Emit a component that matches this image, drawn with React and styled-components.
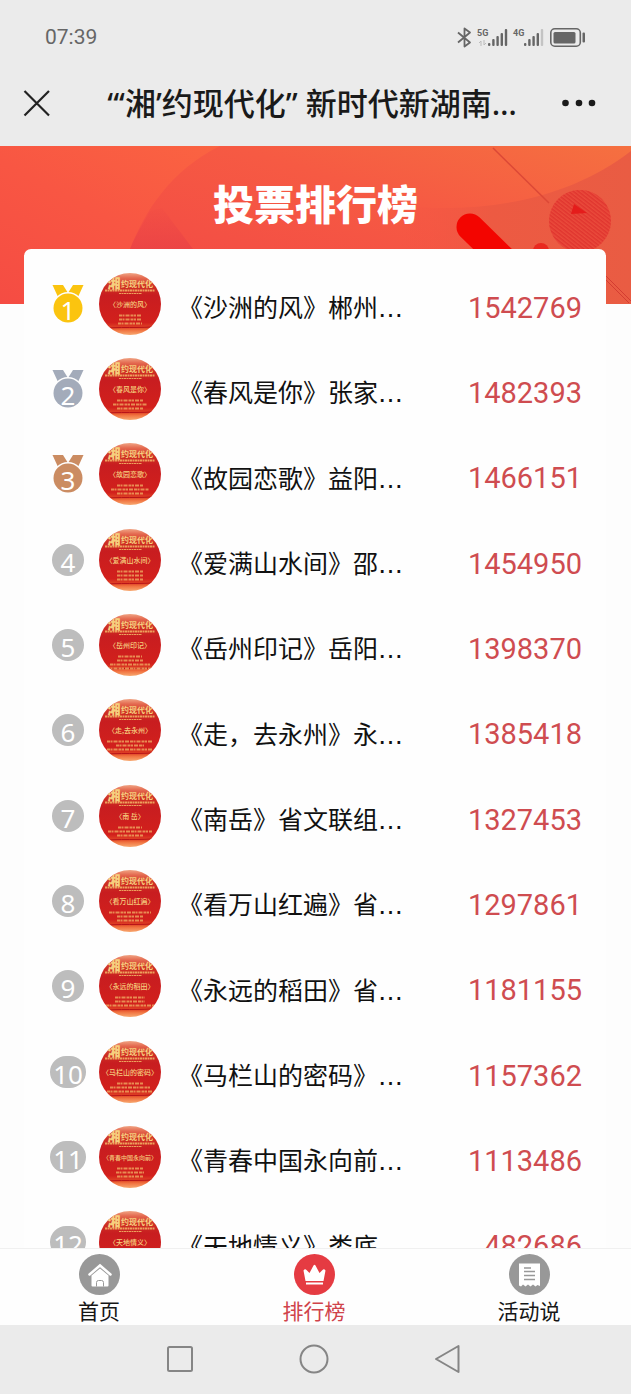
import React from "react";
import styled, { createGlobalStyle } from "styled-components";

const GlobalStyle = createGlobalStyle`
  * { box-sizing: border-box; }
  body {
    margin: 0;
    background: #fdfdfd;
    font-family: "Noto Sans", "Noto Sans CJK SC", sans-serif;
    color: #1a1a1a;
  }
  button {
    border: 0;
    padding: 0;
    background: none;
    font: inherit;
    color: inherit;
    cursor: pointer;
  }
  svg { display: block; }
`;

const Screen = styled.div`
  display: flex;
  flex-direction: column;
  height: 100vh;
  overflow: hidden;
`;

const StatusBar = styled.div`
  flex: none;
  display: flex;
  align-items: center;
  justify-content: space-between;
  height: 74px;
  padding: 0 45px;
  background: #ebebeb;
  color: #666;
`;

const Clock = styled.time`
  font: 400 21px/24px Roboto, sans-serif;
`;

const TitleBar = styled.header`
  flex: none;
  display: flex;
  align-items: center;
  justify-content: space-between;
  height: 72px;
  padding: 0 34px 14px 23px;
  background: #ebebeb;
`;

const PageTitle = styled.h1`
  margin: 0;
  padding-left: 12px;
  font: 500 31px/44px "Noto Sans", "Noto Sans CJK SC", sans-serif;
  white-space: nowrap;
`;

const Content = styled.main`
  flex: 1;
  min-height: 0;
  overflow: hidden;
`;

const Banner = styled.div`
  display: grid;
  height: 158px;
  overflow: hidden;
  background: #f4523f;

  > * { grid-area: 1 / 1; }
  > svg { width: 100%; height: 158px; }
`;

const BannerTitle = styled.h2`
  margin: 0;
  padding-top: 26px;
  position: relative;
  text-align: center;
  color: #fff;
  font: 900 41px/60px "Noto Sans CJK SC", sans-serif;
`;

const Card = styled.ol`
  position: relative;
  display: grid;
  grid-auto-rows: 85px 85px 86px;
  list-style: none;
  margin: -55px 25px 0 24px;
  padding: 12px 24px 0 26px;
  border-radius: 7px;
  background: #fefefe;
`;

const Row = styled.li`
  display: flex;
  align-items: center;
`;

const RankCell = styled.div`
  flex: none;
  display: flex;
  justify-content: center;
  width: 36px;
  margin-right: 13px;
`;

const RankBadge = styled.span`
  width: ${(p) => (p.$wide ? 36 : 32)}px;
  height: 32px;
  padding-top: 2px;
  border-radius: 16px;
  background: #bdbdbd;
  color: #fff;
  font-size: 26px;
  line-height: 32px;
  text-align: center;
`;

const Medal = styled.span`
  display: grid;
  justify-items: center;
  width: 32px;
  height: 38px;
  color: #fff;
  font-size: 26px;
  line-height: 38px;

  > * { grid-area: 1 / 1; }
  > span { position: relative; padding-top: 6px; }
`;

const Poster = styled.svg`
  flex: none;
  width: 62px;
  height: 62px;
  border-radius: 50%;
`;

const Name = styled.a`
  flex: 1;
  min-width: 0;
  overflow: hidden;
  padding-top: 8px;
  margin-left: 17px;
  color: #111;
  font: 400 25px/36px "Noto Sans CJK SC", sans-serif;
  white-space: nowrap;
  text-decoration: none;
`;

const Dots = styled.span`
  font-family: "DejaVu Sans", sans-serif;
`;

const Votes = styled.span`
  padding-top: 8px;
  color: #cf4c50;
  font: 400 29px/36px Roboto, sans-serif;
`;

const TabBar = styled.nav`
  flex: none;
  display: flex;
  justify-content: space-between;
  height: 77px;
  padding: 5px 70px 0 67px;
  border-top: 1px solid #f0f0f0;
  background: #fefefe;
`;

const Tab = styled.button`
  display: flex;
  flex-direction: column;
  align-items: center;
  width: 64px;
  color: ${(p) => (p.$active ? "#d0434a" : "#161616")};
  font: 400 21px/30px "Noto Sans CJK SC", sans-serif;
  white-space: nowrap;
`;

const SystemBar = styled.div`
  flex: none;
  display: flex;
  align-items: center;
  justify-content: center;
  gap: 104px;
  height: 69px;
  padding: 0 3px 2px 0;
  background: #ebebeb;
`;

const entries = [
  { name: "《沙洲的风》郴州", song: "沙洲的风", votes: 1542769, credits: [22, 22, 24] },
  { name: "《春风是你》张家", song: "春风是你", votes: 1482393, credits: [26, 34, 26] },
  { name: "《故园恋歌》益阳", song: "故园恋歌", votes: 1466151, credits: [26, 38, 26] },
  { name: "《爱满山水间》邵", song: "爱满山水间", votes: 1454950, credits: [26, 26, 26] },
  { name: "《岳州印记》岳阳", song: "岳州印记", votes: 1398370, credits: [24, 26, 40, 46] },
  { name: "《走，去永州》永", song: "走,去永州", votes: 1385418, credits: [46, 28, 46] },
  { name: "《南岳》省文联组", song: "南 岳", votes: 1327453, credits: [24, 44, 26] },
  { name: "《看万山红遍》省", song: "看万山红遍", votes: 1297861, credits: [42, 26, 26] },
  { name: "《永远的稻田》省", song: "永远的稻田", votes: 1181155, credits: [30, 30, 48] },
  { name: "《马栏山的密码》", song: "马栏山的密码", votes: 1157362, credits: [26, 40, 46] },
  { name: "《青春中国永向前", song: "青春中国永向前", votes: 1113486, credits: [26, 28, 26] },
  { name: "《天地情义》娄底", song: "天地情义", votes: 482686, credits: [26, 26, 26] },
];

const medalColors = ["#fbc40f", "#a3abba", "#cb8c62"];

function Rank({ n }) {
  if (n > 3) {
    return <RankBadge $wide={n > 9}>{n}</RankBadge>;
  }
  const color = medalColors[n - 1];
  return (
    <Medal>
      <svg width="32" height="38" viewBox="0 0 32 38" fill={color} aria-hidden="true">
        <path d="M0.500 0H11l5 8-6 3-4 1z" />
        <path d="M31.500 0H21l-5 8 6 3 4 1z" />
        <circle cx="16" cy="23" r="16" fill="#fefefe" />
        <circle cx="16" cy="23" r="14.500" />
      </svg>
      <span>{n}</span>
    </Medal>
  );
}

function SongPoster({ song, credits }) {
  return (
    <Poster viewBox="0 0 62 62" aria-hidden="true">
      <defs>
        <linearGradient id="poster" x1="0" y1="0" x2="0" y2="1">
          <stop offset="0" stopColor="#f0a484" />
          <stop offset="0.08" stopColor="#e46a50" />
          <stop offset="0.2" stopColor="#cf3325" />
          <stop offset="0.36" stopColor="#c81d20" />
          <stop offset="0.8" stopColor="#d2201c" />
          <stop offset="0.88" stopColor="#df4426" />
          <stop offset="0.92" stopColor="#f0703e" />
          <stop offset="1" stopColor="#f8a970" />
        </linearGradient>
      </defs>
      <rect width="62" height="62" fill="url(#poster)" />
      <path d="M0 56C20 53 40 56 62 53" fill="none" stroke="#b8141a" />
      <g fill="#f6cf7e" textAnchor="middle" fontFamily="Noto Sans CJK SC">
        <text x="15" y="15" fontSize="13" fontWeight="900">湘</text>
        <text x="38" y="14" fontSize="8" fontWeight="700">约现代化</text>
        <text x="31" y="34" fontSize={song.length > 6 ? 6 : 7} fontWeight="500">
          〈{song}〉
        </text>
      </g>
      <g stroke="#eda05c" strokeWidth="2">
        <path d="M6 17.500H56" strokeDasharray="2 0.500" />
        <path d="M20 20.500H43" strokeWidth="1" strokeDasharray="2 0.500" />
        {credits.map((w, i) => (
          <path
            key={i}
            d={`M${31 - w / 2} ${42.5 + i * 4}h${w}`}
            strokeDasharray="3 0.500 2 1 4 1"
            opacity="0.850"
          />
        ))}
      </g>
    </Poster>
  );
}

function BannerArt() {
  return (
    <svg viewBox="0 0 631 158" preserveAspectRatio="xMidYMid slice" aria-hidden="true">
      <defs>
        <linearGradient id="warm" x1="0" y1="1" x2="1" y2="0">
          <stop offset="0" stopColor="#f54c43" />
          <stop offset="0.45" stopColor="#f85643" />
          <stop offset="1" stopColor="#fb6841" />
        </linearGradient>
        <linearGradient id="disc" x1="0" y1="1" x2="1" y2="0">
          <stop offset="0" stopColor="#f24745" />
          <stop offset="0.6" stopColor="#f65a43" />
          <stop offset="1" stopColor="#f57040" />
        </linearGradient>
        <linearGradient id="shade" x1="0" y1="0" x2="1" y2="0">
          <stop offset="0" stopColor="#f45344" stopOpacity="0" />
          <stop offset="0.4" stopColor="#ed5a42" />
          <stop offset="1" stopColor="#e95c43" />
        </linearGradient>
        <linearGradient id="fold" x1="0" y1="0" x2="0" y2="1">
          <stop offset="0" stopColor="#ea4346" stopOpacity="0.100" />
          <stop offset="1" stopColor="#ea4346" stopOpacity="0.800" />
        </linearGradient>
        <pattern id="stripes" width="3" height="3" patternUnits="userSpaceOnUse" patternTransform="rotate(38)">
          <rect width="3" height="1.500" fill="#e0352f" />
        </pattern>
      </defs>
      <rect width="300" height="158" fill="url(#warm)" />
      <path d="M220 0C170 25 145 65 130 103V158H631V0z" fill="url(#disc)" />
      <path d="M162 62L193 103H130C137 86 146 73 150 65z" fill="url(#fold)" />
      <path d="M400 60C490 68 570 52 631 5V158H400z" fill="url(#shade)" />
      <path d="M493 2L549 57" stroke="#dc4836" strokeWidth="1.500" />
      <path d="M470 81L512 122" stroke="#f30500" strokeWidth="27" strokeLinecap="round" />
      <circle cx="541" cy="105" r="8" fill="#e92920" />
      <circle cx="580" cy="75" r="31" fill="#ea4b3b" />
      <circle cx="580" cy="75" r="31" fill="url(#stripes)" />
      <path d="M574 58L587 67L571 68z" fill="#e51c1b" />
      <path d="M604 128L631 155M604 132L629 157" stroke="#d43c31" />
    </svg>
  );
}

function StatusIcons() {
  const bars = [3, 7, 10, 13, 17];
  return (
    <svg width="130" height="22" viewBox="456 26 130 22" fill="#666" aria-hidden="true">
      <path
        d="M458 32.500L470 42.500L464.500 46.500V28.500L470 32.500L458 42.500"
        fill="none"
        stroke="#666"
        strokeWidth="1.800"
        strokeLinejoin="round"
      />
      <g fontFamily="Roboto" fontWeight="700" fontSize="9">
        <text x="477" y="36">5G</text>
        <text x="513" y="36">4G</text>
      </g>
      <path d="M481 46V41l-2 2M484 40v5l2-2" fill="none" stroke="#bbb" />
      {bars.map((h, i) => (
        <g key={h}>
          <rect x={488 + i * 4.2} y={46 - h} width="2.400" height={h} rx="1" />
          <rect x={524 + i * 4.2} y={46 - h} width="2.400" height={h} rx="1" opacity={i === 4 ? 0.3 : 1} />
        </g>
      ))}
      <rect x="550.800" y="28.800" width="29.500" height="17.400" rx="4" fill="none" stroke="#666" strokeWidth="1.600" />
      <rect x="553.500" y="32" width="22" height="11.500" rx="1.500" />
      <rect x="582.500" y="32.500" width="2.500" height="10" rx="1" />
    </svg>
  );
}

function HomeIcon() {
  return (
    <svg width="41" height="41" viewBox="0 0 41 41" aria-hidden="true">
      <circle cx="20.500" cy="20.500" r="20.500" fill="#989898" />
      <path d="M10.500 20.500L21 11.500L31.500 20.500" fill="none" stroke="#fff" strokeWidth="2.500" strokeLinecap="round" />
      <path d="M12.500 21.500L21 14.500L29.500 21.500V31.500Q29.500 32.500 28.500 32.500H13.500Q12.500 32.500 12.500 31.500z" fill="#fff" />
      <path d="M17.500 32.500V28.500Q17.500 26.500 19.500 26.500H22.500Q24.500 26.500 24.500 28.500V32.500" fill="none" stroke="#989898" />
    </svg>
  );
}

function CrownIcon() {
  return (
    <svg width="41" height="41" viewBox="0 0 41 41" aria-hidden="true">
      <circle cx="20.500" cy="20.500" r="20.500" fill="#e53b42" />
      <path
        d="M9.500 16.500Q11 14.500 12.500 16L15.500 19L19.500 11.500Q20.500 10 21.500 11.500L25.500 19L28.500 16Q30 14.500 31.500 16.500L29.500 27H11.500z"
        fill="#fff"
      />
      <path d="M12 29.500H29" stroke="#fff" strokeWidth="2" />
    </svg>
  );
}

function ReceiptIcon() {
  return (
    <svg width="41" height="41" viewBox="0 0 41 41" aria-hidden="true">
      <circle cx="20.500" cy="20.500" r="20.500" fill="#989898" />
      <path
        d="M10 9.500H31V32L28.500 31L26.500 32.500L24 30.500L21.500 32.500L19 30.500L16.500 32.500L14 30.500L12 32.500L10 31.500z"
        fill="#fff"
      />
      <path d="M15 14H22M15 17.500H26M15 21.500H26M15 25.500H26" stroke="#989898" strokeWidth="1.400" />
    </svg>
  );
}

const tabs = [
  { label: "首页", Icon: HomeIcon },
  { label: "排行榜", Icon: CrownIcon, active: true },
  { label: "活动说", Icon: ReceiptIcon },
];

const systemKeys = [
  { label: "最近任务", shape: <rect x="3" y="3" width="24" height="24" rx="1.500" /> },
  { label: "主屏幕", shape: <circle cx="15" cy="15" r="13.500" /> },
  { label: "返回", shape: <path d="M3 15L25.500 2V28z" /> },
];

export default function App() {
  return (
    <Screen>
      <GlobalStyle />
      <StatusBar>
        <Clock>07:39</Clock>
        <StatusIcons />
      </StatusBar>
      <TitleBar>
        <button type="button" aria-label="关闭">
          <svg width="28" height="28" viewBox="0 0 28 28" fill="none" stroke="#222" strokeWidth="2.200">
            <path d="M1.500 2L26 26.500M26 2L1.500 26.500" />
          </svg>
        </button>
        <PageTitle>“‘湘’约现代化” 新时代新湖南…</PageTitle>
        <button type="button" aria-label="更多">
          <svg width="36" height="10" viewBox="0 0 36 10" fill="#1a1a1a">
            <circle cx="4.500" cy="5" r="3.300" />
            <circle cx="18" cy="5" r="3.300" />
            <circle cx="31" cy="5" r="3.300" />
          </svg>
        </button>
      </TitleBar>
      <Content>
        <Banner>
          <BannerArt />
          <BannerTitle>投票排行榜</BannerTitle>
        </Banner>
        <Card>
          {entries.map((entry, i) => (
            <Row key={entry.votes}>
              <RankCell>
                <Rank n={i + 1} />
              </RankCell>
              <SongPoster song={entry.song} credits={entry.credits} />
              <Name href="#">
                {entry.name}
                <Dots>…</Dots>
              </Name>
              <Votes>{entry.votes}</Votes>
            </Row>
          ))}
        </Card>
      </Content>
      <TabBar>
        {tabs.map(({ label, Icon, active }) => (
          <Tab key={label} type="button" $active={active}>
            <Icon />
            {label}
          </Tab>
        ))}
      </TabBar>
      <SystemBar>
        {systemKeys.map(({ label, shape }) => (
          <button key={label} type="button" aria-label={label}>
            <svg width="30" height="30" viewBox="0 0 30 30" fill="none" stroke="#858585" strokeWidth="2" strokeLinejoin="round">
              {shape}
            </svg>
          </button>
        ))}
      </SystemBar>
    </Screen>
  );
}
